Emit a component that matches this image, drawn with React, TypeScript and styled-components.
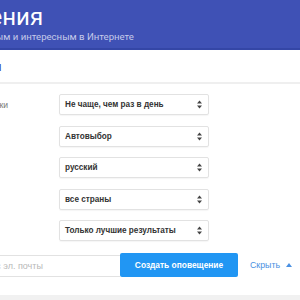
import React from 'react';
import styled, { createGlobalStyle } from 'styled-components';

const GlobalStyle = createGlobalStyle`
  html, body {
    margin: 0;
    padding: 0;
    background: #fff;
    overflow: hidden;
  }
  body {
    font-family: 'Liberation Sans', Arial, sans-serif;
  }
`;

const Page = styled.div`
  width: 300px;
  height: 300px;
  display: flex;
  flex-direction: column;
  overflow: hidden;
`;

const Header = styled.header`
  height: 48px;
  background: #3f51b5;
  border-bottom: 2px solid #3446a6;
  flex-shrink: 0;
`;

const HeaderInner = styled.div`
  margin-left: -101px;
  padding-top: 3px;
  white-space: nowrap;
`;

const Title = styled.h1`
  margin: 0;
  font-family: Roboto, 'Noto Sans', sans-serif;
  font-weight: 400;
  font-size: 24px;
  line-height: 28px;
  color: #fff;
`;

const Subtitle = styled.p`
  margin: 0 0 0 28px;
  font-family: Roboto, 'Noto Sans', sans-serif;
  font-size: 9.6px;
  line-height: 12px;
  color: #c5cae9;
`;

const SectionHead = styled.div`
  height: 31px;
  border-bottom: 2px solid #efefef;
  display: flex;
  align-items: center;
  padding-top: 1px;
`;

const SectionTitle = styled.h2`
  margin: 0 0 0 -69px;
  font-family: Roboto, 'Noto Sans', sans-serif;
  font-weight: 400;
  font-size: 13px;
  color: #3f51b5;
  white-space: nowrap;
`;

const Options = styled.div`
  margin: 10px 0 0 -62px;
  display: grid;
  grid-template-columns: 121px 150px;
  row-gap: 10.5px;
  align-items: center;
`;

const Label = styled.span`
  font-size: 8.6px;
  color: #777;
  white-space: nowrap;
`;

const SelectBox = styled.div`
  height: 19px;
  border: 1px solid #e2e2e2;
  border-radius: 2px;
  box-shadow: 0 1px 1px rgba(0, 0, 0, 0.04);
  display: flex;
  align-items: center;
  justify-content: space-between;
  padding: 0 6px 0 5px;
  font-size: 8.2px;
  font-weight: bold;
  color: #333;
  white-space: nowrap;
`;

const Arrows = styled.svg`
  width: 5px;
  height: 9px;
  flex-shrink: 0;
`;

const Actions = styled.div`
  margin: 12px 0 0 -34px;
  display: flex;
  align-items: center;
`;

const EmailInput = styled.input`
  box-sizing: border-box;
  width: 154px;
  height: 22px;
  margin: 2px 0 0;
  border: 1px solid #e2e2e2;
  border-right: none;
  border-radius: 2px 0 0 2px;
  padding: 0 8px;
  font-family: 'Liberation Sans', Arial, sans-serif;
  font-size: 9px;
  outline: none;
  &::placeholder {
    color: #b8b8b8;
  }
`;

const CreateButton = styled.button`
  width: 118px;
  height: 24px;
  border: none;
  border-radius: 2px;
  background: #2196f3;
  color: #fff;
  font-family: 'Liberation Sans', Arial, sans-serif;
  font-size: 8.4px;
  font-weight: bold;
  padding: 0;
`;

const HideLink = styled.a`
  margin-left: 12px;
  display: flex;
  align-items: center;
  gap: 6px;
  font-size: 8.8px;
  color: #4a90e2;
  text-decoration: none;
`;

const Footer = styled.div`
  margin-top: auto;
  height: 5px;
  background: #f1f1f1;
`;

const options: [string, string][] = [
  ['Частота отправки', 'Не чаще, чем раз в день'],
  ['Источники', 'Автовыбор'],
  ['Язык', 'русский'],
  ['Регион', 'все страны'],
  ['Количество', 'Только лучшие результаты'],
];

const UpDown = () => (
  <Arrows viewBox="0 0 5 9">
    <path d="M2.5 0.5 L5 3.5 H0 Z" fill="#444" />
    <path d="M2.5 8.5 L5 5.5 H0 Z" fill="#444" />
  </Arrows>
);

const App: React.FC = () => {
  return (
    <Page>
      <GlobalStyle />
      <Header>
        <HeaderInner>
          <Title>Оповещения</Title>
          <Subtitle>Следите за новым и интересным в Интернете</Subtitle>
        </HeaderInner>
      </Header>
      <SectionHead>
        <SectionTitle>Параметры</SectionTitle>
      </SectionHead>
      <Options>
        {options.map(([label, value]) => (
          <React.Fragment key={label}>
            <Label>{label}</Label>
            <SelectBox>
              {value}
              <UpDown />
            </SelectBox>
          </React.Fragment>
        ))}
      </Options>
      <Actions>
        <EmailInput placeholder="Адрес эл. почты" />
        <CreateButton>Создать оповещение</CreateButton>
        <HideLink href="#">
          Скрыть
          <svg width="6" height="4" viewBox="0 0 6 4">
            <path d="M3 0 L6 4 H0 Z" fill="#4a90e2" />
          </svg>
        </HideLink>
      </Actions>
      <Footer />
    </Page>
  );
};

export default App;
